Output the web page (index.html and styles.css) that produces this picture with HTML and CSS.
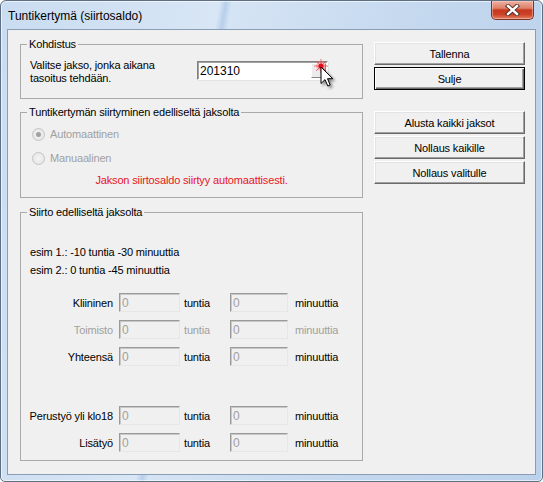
FILE: index.html
```html
<!DOCTYPE html>
<html lang="fi">
<head>
    <meta charset="UTF-8">
    <title>Tuntikertymä (siirtosaldo)</title>
    <link rel="stylesheet" href="styles.css">
</head>
<body>
    <div class="window">
        <div class="titlebar">
            <span class="title">Tuntikertymä (siirtosaldo)</span>
            <button class="close-btn" aria-label="Sulje">
                <svg width="15" height="12" viewBox="0 0 15 12">
                    <path d="M3 2 L12 10 M12 2 L3 10" stroke="#4a2a24" stroke-width="4.2" stroke-linecap="square"/>
                    <path d="M3 2 L12 10 M12 2 L3 10" stroke="#fff" stroke-width="2.4" stroke-linecap="square"/>
                </svg>
            </button>
        </div>

        <div class="client">
            <div class="left">
                <fieldset class="group group-target">
                    <legend>Kohdistus</legend>
                    <div class="target-row">
                        <div class="target-label">Valitse jakso, jonka aikana<br>tasoitus tehdään.</div>
                        <div class="period-input">
                            <span class="period-value">201310</span>
                            <span class="period-btn"></span>
                            <svg class="sparkle" width="14" height="14" viewBox="0 0 14 14">
                                <circle cx="7" cy="7" r="5" fill="#ff6b6b" opacity="0.35"/>
                                <path d="M7 0 L7 14 M0 7 L14 7 M2 2 L12 12 M12 2 L2 12" stroke="#f23a3a" stroke-width="1" opacity="0.7"/>
                                <circle cx="7" cy="7" r="2.6" fill="#e0101a"/>
                            </svg>
                            <svg class="cursor" width="16" height="24" viewBox="0 0 16 24">
                                <path d="M1 1 L1 17.5 L5 13.6 L7.8 20 L10.2 19 L7.5 12.7 L12.8 12.7 Z" fill="#fff" stroke="#000" stroke-width="1" stroke-linejoin="miter"/>
                            </svg>
                        </div>
                    </div>
                </fieldset>

                <fieldset class="group group-transfer">
                    <legend>Tuntikertymän siirtyminen edelliseltä jaksolta</legend>
                    <div class="radio-row">
                        <span class="radio checked"></span>
                        <span class="muted">Automaattinen</span>
                    </div>
                    <div class="radio-row">
                        <span class="radio"></span>
                        <span class="muted">Manuaalinen</span>
                    </div>
                    <div class="notice">Jakson siirtosaldo siirtyy automaattisesti.</div>
                </fieldset>

                <fieldset class="group group-balance">
                    <legend>Siirto edelliseltä jaksolta</legend>
                    <div class="examples">
                        <div>esim 1.: -10 tuntia -30 minuuttia</div>
                        <div>esim 2.: 0 tuntia -45 minuuttia</div>
                    </div>

                    <div class="fields">
                        <div class="field-row">
                            <span class="field-label">Kliininen</span>
                            <input class="field-input" type="text" value="0" disabled>
                            <span class="unit">tuntia</span>
                            <input class="field-input field-input-min" type="text" value="0" disabled>
                            <span class="unit-min">minuuttia</span>
                        </div>
                        <div class="field-row muted">
                            <span class="field-label">Toimisto</span>
                            <input class="field-input" type="text" value="0" disabled>
                            <span class="unit">tuntia</span>
                            <input class="field-input field-input-min" type="text" value="0" disabled>
                            <span class="unit-min">minuuttia</span>
                        </div>
                        <div class="field-row">
                            <span class="field-label">Yhteensä</span>
                            <input class="field-input" type="text" value="0" disabled>
                            <span class="unit">tuntia</span>
                            <input class="field-input field-input-min" type="text" value="0" disabled>
                            <span class="unit-min">minuuttia</span>
                        </div>
                    </div>

                    <div class="fields fields-extra">
                        <div class="field-row">
                            <span class="field-label">Perustyö yli klo18</span>
                            <input class="field-input" type="text" value="0" disabled>
                            <span class="unit">tuntia</span>
                            <input class="field-input field-input-min" type="text" value="0" disabled>
                            <span class="unit-min">minuuttia</span>
                        </div>
                        <div class="field-row">
                            <span class="field-label">Lisätyö</span>
                            <input class="field-input" type="text" value="0" disabled>
                            <span class="unit">tuntia</span>
                            <input class="field-input field-input-min" type="text" value="0" disabled>
                            <span class="unit-min">minuuttia</span>
                        </div>
                    </div>
                </fieldset>
            </div>

            <div class="actions">
                <button class="btn">Tallenna</button>
                <button class="btn btn-default">Sulje</button>
                <button class="btn btn-spaced">Alusta kaikki jaksot</button>
                <button class="btn">Nollaus kaikille</button>
                <button class="btn">Nollaus valitulle</button>
            </div>
        </div>
    </div>
</body>
</html>
```

FILE: styles.css
```css
body {
    margin: 0;
    background: #fff;
    font-family: 'Liberation Sans', Arial, sans-serif;
}

.window {
    box-sizing: border-box;
    width: 543px;
    height: 482px;
    display: flex;
    flex-direction: column;
    border: 1px solid #5f6f83;
    border-radius: 6px 6px 5px 5px;
    background: linear-gradient(100deg, #c9dcf1 0%, #d8e6f5 35%, #b7cfea 36%, #d5e4f4 37%, #c3d7ee 70%, #bcd2ec 100%);
    box-shadow: inset 0 0 0 1px rgba(255, 255, 255, 0.6);
}

.titlebar {
    height: 28px;
    display: flex;
    align-items: flex-start;
    padding: 0 8px 0 7px;
}

.title {
    line-height: 30px;
    font-size: 12px;
    color: #000;
}

.close-btn {
    margin-left: auto;
    width: 43px;
    height: 19px;
    padding: 0;
    border: 1px solid #7a3328;
    border-top: none;
    border-radius: 0 0 5px 5px;
    background: linear-gradient(#eeb0a2 0%, #de8068 40%, #c7371d 50%, #cc4327 75%, #e47f62 100%);
    box-shadow: inset 0 0 0 1px rgba(255, 220, 210, 0.45);
    display: flex;
    align-items: center;
    justify-content: center;
}

.client {
    flex: 1;
    margin: 0 6px 6px;
    border: 1px solid #8a9db5;
    background: #f0f0f0;
    display: flex;
    align-items: flex-start;
    gap: 11px;
    padding: 7px 0 0 12px;
    font-size: 11px;
    letter-spacing: -0.15px;
    color: #000;
}

.left {
    width: 343px;
    display: flex;
    flex-direction: column;
}

.group {
    box-sizing: border-box;
    margin: 0;
    padding: 0;
    min-width: 0;
    border: 1px solid #a9a9a9;
}

.group legend {
    margin-left: 6px;
    padding: 0 2px;
    line-height: 14px;
}

.group-target {
    height: 62px;
}

.group-transfer {
    height: 93px;
    margin-top: 6px;
}

.group-balance {
    height: 256px;
    margin-top: 7px;
}

/* Kohdistus */
.target-row {
    display: flex;
    align-items: flex-start;
    padding: 8px 0 0 9px;
}

.target-label {
    width: 167px;
    line-height: 13px;
}

.period-input {
    position: relative;
    box-sizing: border-box;
    width: 131px;
    height: 19px;
    margin-top: 2px;
    background: #fff;
    border: 1px solid;
    border-color: #828282 #fff #fff #828282;
    box-shadow: inset 1px 1px 0 #a0a0a0, 1px 1px 0 #e3e3e3;
    display: flex;
    align-items: center;
}

.period-value {
    flex: 1;
    padding-left: 2px;
    font-size: 12px;
    letter-spacing: 0;
}

.period-btn {
    box-sizing: border-box;
    width: 15px;
    height: 15px;
    margin-right: 1px;
    background: #ececec;
    border: 1px solid;
    border-color: #fff #888 #888 #fff;
}

.sparkle {
    position: absolute;
    left: 116px;
    top: -3px;
}

.cursor {
    position: absolute;
    left: 122px;
    top: 4px;
    filter: drop-shadow(2px 2px 1.5px rgba(0, 0, 0, 0.45));
}

/* Siirtyminen */
.radio-row {
    height: 16px;
    display: flex;
    align-items: center;
    gap: 5px;
    padding-left: 11px;
    margin-top: 7px;
}

.radio-row + .radio-row {
    margin-top: 8px;
}

.radio {
    box-sizing: border-box;
    width: 13px;
    height: 13px;
    border-radius: 50%;
    border: 1px solid #c4c4c4;
    background: radial-gradient(circle, #f4f4f4 0%, #e2e2e2 100%);
    display: flex;
    align-items: center;
    justify-content: center;
}

.radio.checked::after {
    content: "";
    width: 5px;
    height: 5px;
    border-radius: 50%;
    background: #a0a0a0;
}

.muted {
    color: #a0a0a0;
}

.notice {
    margin-top: 8px;
    line-height: 13px;
    text-align: center;
    color: #e8141e;
}

/* Siirto */
.examples {
    padding: 24px 0 0 9px;
    line-height: 18px;
}

.fields {
    display: flex;
    flex-direction: column;
    gap: 8px;
    margin-top: 14px;
    padding-left: 9px;
}

.fields-extra {
    margin-top: 40px;
}

.field-row {
    display: flex;
    align-items: center;
    height: 19px;
}

.field-label {
    width: 83px;
    margin-right: 6px;
    display: flex;
    justify-content: flex-end;
    white-space: nowrap;
}

.field-input {
    box-sizing: border-box;
    width: 61px;
    height: 19px;
    margin: 0 4px 0 0;
    padding: 0 0 0 2px;
    font: 12px 'Liberation Sans', Arial, sans-serif;
    color: #a0a0a0;
    background: #f0f0f0;
    border: 1px solid;
    border-color: #9a9a9a #e6e6e6 #e6e6e6 #9a9a9a;
    box-shadow: inset 1px 1px 0 #c8c8c8;
}

.field-input-min {
    width: 58px;
    margin-right: 7px;
}

.unit {
    width: 46px;
}

/* Painikkeet */
.actions {
    width: 151px;
    padding-top: 5px;
    display: flex;
    flex-direction: column;
    gap: 2px;
}

.btn {
    box-sizing: border-box;
    height: 23px;
    padding: 0;
    font: 11px 'Liberation Sans', Arial, sans-serif;
    letter-spacing: -0.15px;
    color: #000;
    background: #f0f0f0;
    border: 1px solid;
    border-color: #fff #696969 #696969 #fff;
    box-shadow: inset -1px -1px 0 #a0a0a0, inset 1px 1px 0 #e3e3e3;
}

.btn-default {
    border: 1px solid #000;
    box-shadow: inset 1px 1px 0 #fff, inset -1px -1px 0 #696969, inset -2px -2px 0 #a0a0a0;
}

.btn-spaced {
    margin-top: 19px;
}
```
